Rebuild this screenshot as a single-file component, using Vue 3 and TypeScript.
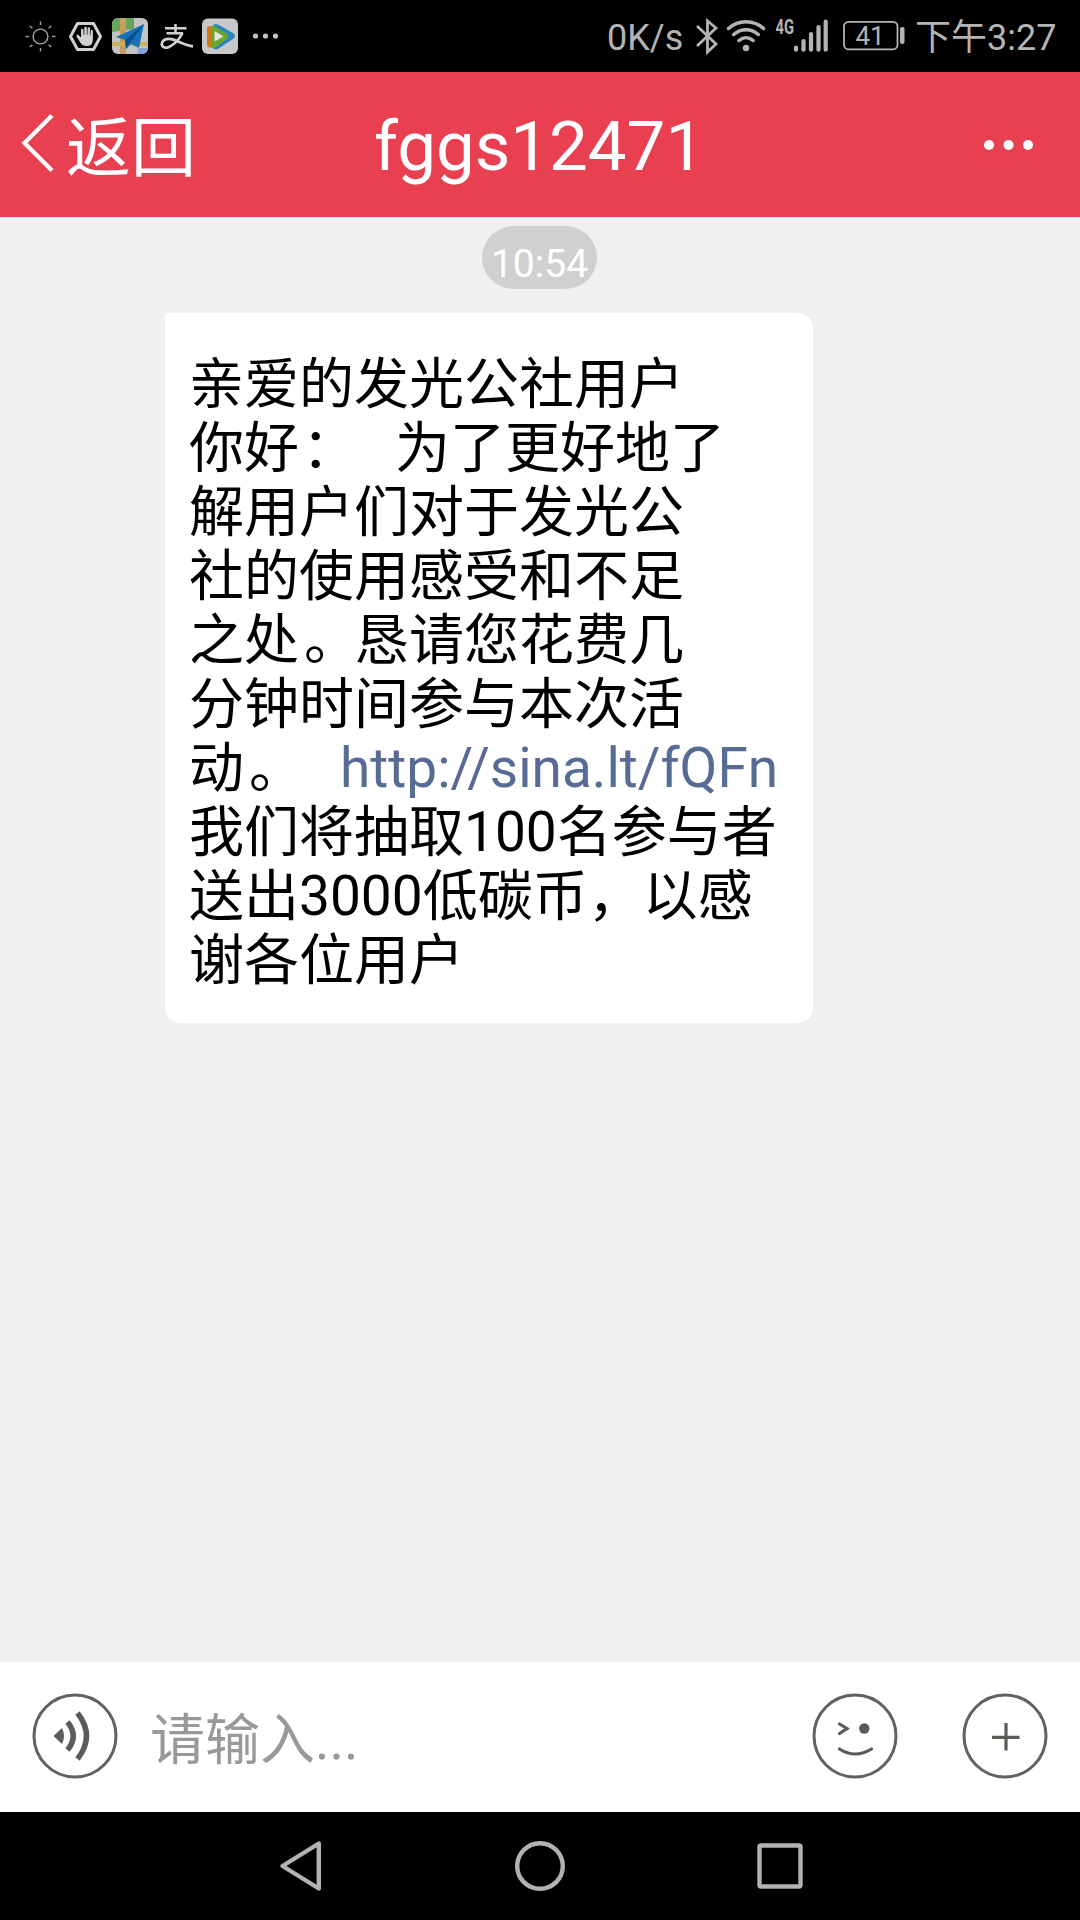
<script setup lang="ts">
interface Segment {
  text: string
  kind?: 'link' | 'stop' | 'colon' | 'latin'
}

const title = 'fggs12471'
const sentAt = '10:54'
const rays = [0, 45, 90, 135, 180, 225, 270, 315]

const lines: Segment[][] = [
  [{ text: '亲爱的发光公社用户' }],
  [{ text: '你好' }, { text: '：', kind: 'colon' }, { text: '   为了更好地了' }],
  [{ text: '解用户们对于发光公' }],
  [{ text: '社的使用感受和不足' }],
  [{ text: '之处' }, { text: '。', kind: 'stop' }, { text: '恳请您花费几' }],
  [{ text: '分钟时间参与本次活' }],
  [{ text: '动' }, { text: '。', kind: 'stop' }, { text: '   ' }, { text: 'http://sina.lt/fQFn', kind: 'link' }],
  [{ text: '我们将抽取' }, { text: '100', kind: 'latin' }, { text: '名参与者' }],
  [{ text: '送出' }, { text: '3000', kind: 'latin' }, { text: '低碳币，以感' }],
  [{ text: '谢各位用户' }],
]
</script>

<template>
  <div class="screen">
    <div class="status">
      <svg class="status-left" width="290" height="72" viewBox="0 0 290 72">
        <g fill="none" stroke="#a2a2a2" stroke-width="1.4">
          <circle cx="40.5" cy="36.5" r="7.4" />
          <path v-for="r in rays" :key="r" d="M40.5 25v-3.5" :transform="`rotate(${r} 40.5 36.5)`" />
        </g>
        <path d="M77.500 23.500h16l7 13-7 13h-16l-7-13z" fill="none" stroke="#d0d0d0" stroke-width="3" stroke-linejoin="round" />
        <path d="M81 43.500c-1.500-2.500-3.500-5-4.500-7-.6-1.500 1.200-2.300 2.200-1.200l2.300 2.300v-7.600c0-1.800 2.200-1.800 2.400 0l.4 5h.5v-6.800c0-1.800 2.400-1.800 2.500 0l.1 6.600h.5l.2-6.400c.1-1.700 2.300-1.600 2.300.1v7h.5l.3-4.500c.2-1.600 2.200-1.400 2.200.2v7.800c0 4.500-2 7-5.700 7-2.700 0-4.700-.5-6.200-2.500z" fill="#d0d0d0" />
        <clipPath id="map-clip"><rect x="112" y="18" width="36" height="36" rx="6" /></clipPath>
        <g clip-path="url(#map-clip)">
          <rect x="112" y="18" width="36" height="36" fill="#c4c4c4" />
          <path d="M112 18h22v11l-22 3z" fill="#68a55b" />
          <path d="M120 18h6v36h-6z" fill="#c99d62" />
          <path d="M112 42h36v4h-36z" fill="#c7b45c" />
          <path d="M138 48h10v6h-10z" fill="#82a4d8" />
          <path d="M144 24l-28 13 9 3 1 9 5-5 8 4z" fill="#1673bb" />
          <path d="M144 24l-19 16 1 9 4-6z" fill="#0a528e" />
        </g>
        <g fill="none" stroke="#d0d0d0" stroke-width="2.500">
          <path d="M165 28.300h21.500M175.500 24v9.300M166.500 33.300h16.500" />
          <path d="M182.500 33c-3 6-8 11.500-14 14.200-4.500 1.500-7.500-1-6.500-4.300 1.300-4 6.500-5 11.500-3.300 6 2.100 12 6 19.500 6.800" stroke-width="2.700" />
        </g>
        <rect x="202" y="18.500" width="36" height="35.500" rx="6" fill="#c7c8ca" />
        <path d="M207 29q0-5 5-2v20q-5 2-5-3z" fill="#d07918" />
        <path d="M213 26q1-3 5-1.500l15 8.500q4 3 0 6l-15 10q-4 1-5-1z" fill="#2a83c1" />
        <path d="M211 26q2-1 5 1l11 7q3 2 0 5l-11 8q-5 3-5-1z" fill="#6aa629" />
        <path d="M214.500 31l9 5.500-9 5z" fill="#e1e8dc" />
        <g fill="#c4c4c4"><circle cx="255.500" cy="36" r="2.600" /><circle cx="265.500" cy="36" r="2.600" /><circle cx="275.500" cy="36" r="2.600" /></g>
      </svg>
      <span class="speed">0K/s</span>
      <svg class="status-right" width="214" height="72" viewBox="692 0 214 72">
        <g fill="none" stroke="#b4b4b4">
          <path d="M697 26l19 18-8.500 8V21l8.500 7-19 18" stroke-width="2.800" />
          <g stroke-width="3.500" stroke-linecap="round">
            <path d="M728.500 28.500c10-9 25-9 35 0M733.700 34.500c7.200-6.500 17.400-6.500 24.600 0M739 40.500c4.200-3.700 9.800-3.700 14 0" />
          </g>
          <g stroke-width="4.200" stroke-linecap="round">
            <path d="M796 47.500v2.200M803.500 41v8.700M811 34v15.700M818.500 27v22.700M825.700 21.500v28.200" />
          </g>
          <rect x="844" y="21.800" width="53.500" height="27.500" rx="4.500" stroke-width="1.800" />
        </g>
        <circle cx="746" cy="48" r="3.200" fill="#b4b4b4" />
        <rect x="900" y="27" width="4.500" height="17" rx="2" fill="#b4b4b4" />
        <text class="net" x="775.500" y="33.500" textLength="18.500" lengthAdjust="spacingAndGlyphs">4G</text>
        <text class="level" x="870" y="45" text-anchor="middle">41</text>
      </svg>
      <span class="clock">下午3:27</span>
    </div>

    <header class="bar">
      <div class="back">
        <svg width="34" height="64" viewBox="0 0 34 64"><path d="M32 4.500L4.500 32 32 59.500" fill="none" stroke="#fff" stroke-width="4.200" /></svg>
        <span>返回</span>
      </div>
      <h1>{{ title }}</h1>
      <svg class="more" width="50" height="12" viewBox="0 0 50 12" fill="#fff"><circle cx="5" cy="6" r="5" /><circle cx="24.500" cy="6" r="5" /><circle cx="44" cy="6" r="5" /></svg>
    </header>

    <main class="chat">
      <time class="stamp">{{ sentAt }}</time>
      <div class="bubble">
        <p v-for="(line, i) in lines" :key="i"><span v-for="(s, j) in line" :key="j" :class="s.kind">{{ s.text }}</span></p>
      </div>
    </main>

    <footer class="composer">
      <svg width="86" height="86" viewBox="0 0 86 86">
        <circle cx="43" cy="43" r="41" fill="none" stroke="#616161" stroke-width="3" />
        <path d="M21.500 43l8.500-8q4 8 0 16z" fill="#5c5c56" />
        <path d="M35.500 29q11.500 14 0 28M45.500 20q18 23 0 46" fill="none" stroke="#5c5c56" stroke-width="5.500" />
      </svg>
      <span class="placeholder">请输入...</span>
      <svg width="86" height="86" viewBox="0 0 86 86">
        <circle cx="43" cy="43" r="41" fill="none" stroke="#616161" stroke-width="3" />
        <path d="M27.500 31l7.500 4.500-7.500 5M27.500 56q15.500 10 32 0" fill="none" stroke="#5c5c5a" stroke-width="3.200" stroke-linecap="round" />
        <circle cx="52.300" cy="35.500" r="5.200" fill="#5c5c56" />
      </svg>
      <svg class="plus" width="86" height="86" viewBox="0 0 86 86">
        <circle cx="43" cy="43" r="41" fill="none" stroke="#616161" stroke-width="3" />
        <path d="M44 30v27.500M30 44.300h27.500" stroke="#5c5c56" stroke-width="3.200" />
      </svg>
    </footer>

    <nav class="keys">
      <svg width="1080" height="108" viewBox="0 1812 1080 108" fill="none" stroke="#b2b2b2" stroke-width="4.400" stroke-linejoin="round">
        <path d="M318.800 1843.500v45l-36.300-22.500z" />
        <circle cx="540" cy="1866" r="22.800" />
        <rect x="759.500" y="1845.500" width="41" height="41" rx="1.500" />
      </svg>
    </nav>
  </div>
</template>

<style>
body {
  margin: 0;
}
</style>

<style scoped>
.screen {
  width: 1080px;
  height: 1920px;
  display: flex;
  flex-direction: column;
  overflow: hidden;
  background: #f0f0f0;
  font-family: Roboto, 'Noto Sans CJK SC', sans-serif;
}
svg {
  display: block;
  flex: none;
}
.status {
  height: 72px;
  display: flex;
  background: #000;
  color: #b4b4b4;
  font-size: 36px;
  line-height: 76px;
  white-space: nowrap;
}
.speed {
  width: 85px;
  margin-left: 317px;
}
.clock {
  margin-left: 9px;
}
.net {
  font-size: 20px;
  font-weight: 700;
  fill: #b4b4b4;
}
.level {
  font-size: 26px;
  fill: #b4b4b4;
}
.bar {
  height: 145px;
  display: flex;
  align-items: center;
  background: #e84050;
  color: #fff;
}
.back {
  width: 353px;
  margin-right: 1px;
  display: flex;
  align-items: center;
  padding-left: 20px;
  font-size: 65px;
  line-height: 80px;
}
.back svg {
  margin-top: -3px;
}
.back span {
  margin-left: 12px;
  margin-top: 9px;
}
h1 {
  flex: 1;
  margin: 5px 0 0;
  font-size: 69px;
  line-height: 82px;
  font-weight: 400;
}
.bar .more {
  margin-right: 46px;
}
.chat {
  flex: 1;
  display: flex;
  flex-direction: column;
  align-items: flex-start;
}
.stamp {
  width: 115px;
  height: 63px;
  margin: 9px 0 0 482px;
  border-radius: 32px;
  background: #d0d0d0;
  color: #fff;
  font-size: 39px;
  line-height: 77px;
  text-align: center;
}
.bubble {
  box-sizing: border-box;
  width: 648px;
  height: 710px;
  margin: 24px 0 0 165px;
  padding: 39px 0 0 24px;
  border-radius: 0 15px 15px 15px;
  background: #fff;
  color: #000;
  font-size: 55px;
}
.bubble p {
  height: 64px;
  margin: 0;
  line-height: 64px;
  white-space: pre;
}
.link {
  color: #576b95;
}
.colon {
  margin: 0 -3px 0 3px;
}
.stop {
  margin: 0 -5px 0 5px;
}
.composer {
  height: 150px;
  box-sizing: border-box;
  display: flex;
  align-items: center;
  padding: 0 32.500px 2px 31.500px;
  background: #fff;
}
.placeholder {
  flex: 1;
  margin: 7px 0 0 32.500px;
  color: #999;
  font-size: 55px;
  line-height: 70px;
}
.plus {
  margin-left: 64px;
}
.keys {
  height: 108px;
  background: #000;
}
</style>
